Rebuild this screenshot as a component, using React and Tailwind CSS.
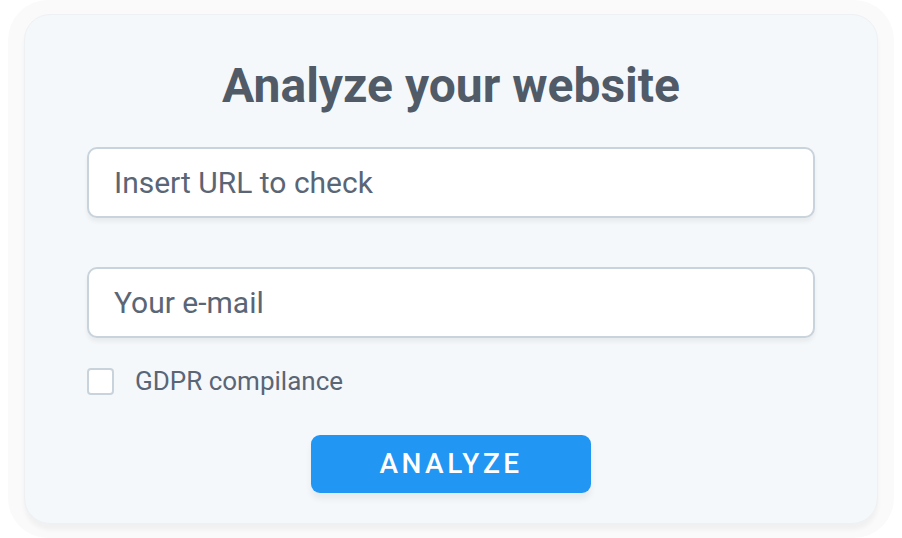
export default function App() {
  return (
    <div className="w-[902px] h-[538px] bg-white overflow-hidden" style={{ fontFamily: "Roboto, sans-serif" }}>
      <div className="mx-[8px] h-[538px] rounded-[40px] bg-[#fafafa] px-[16px] pt-[14px] pb-[8px]">
        <div className="h-[510px] rounded-[26px] bg-[#f5f8fb] border border-[#eef1f4] shadow-[0_6px_4px_rgba(0,0,0,0.04)] flex flex-col items-center pt-[43px]">
          <h1 className="text-[48px] leading-[56px] font-bold text-[#505b67]">Analyze your website</h1>
          <div className="w-[728px] mt-[33px] flex flex-col">
            <input
              placeholder="Insert URL to check"
              className="h-[71px] rounded-[10px] border-2 border-[#c8d3dc] bg-white px-[25px] text-[30px] text-[#5a6575] placeholder:text-[#5a6575] shadow-[0_4px_4px_rgba(0,0,0,0.05)] outline-none"
            />
            <input
              placeholder="Your e-mail"
              className="mt-[49px] h-[71px] rounded-[10px] border-2 border-[#c8d3dc] bg-white px-[25px] text-[30px] text-[#5a6575] placeholder:text-[#5a6575] shadow-[0_4px_4px_rgba(0,0,0,0.05)] outline-none"
            />
            <label className="mt-[28px] flex items-center gap-[21px]">
              <span className="w-[27px] h-[27px] rounded-[4px] border-2 border-[#c8d3dc] bg-white"></span>
              <span className="text-[26px] leading-[30px] text-[#5a6575]">GDPR compilance</span>
            </label>
          </div>
          <button className="mt-[39px] w-[280px] h-[58px] rounded-[9px] bg-[#2196f3] text-white text-[28px] font-medium tracking-[3.5px] shadow-[0_6px_6px_rgba(0,0,0,0.06)]">
            ANALYZE
          </button>
        </div>
      </div>
    </div>
  );
}
